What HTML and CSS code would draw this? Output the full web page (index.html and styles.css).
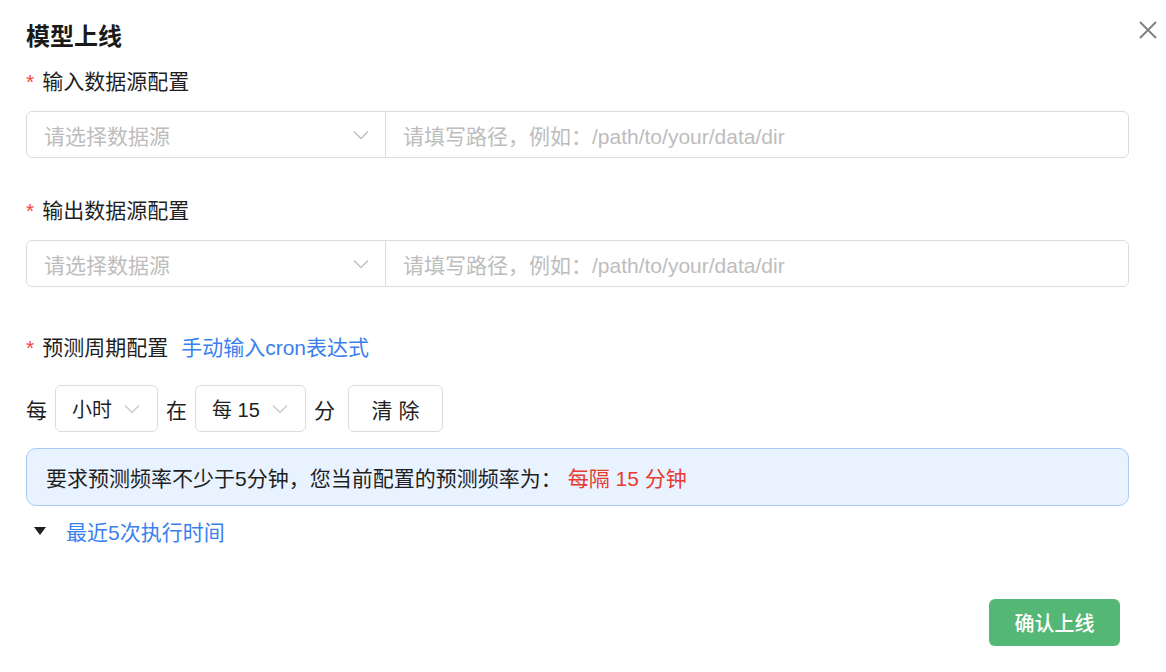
FILE: index.html
```html
<!DOCTYPE html>
<html>
  <head>
    <title>模型上线</title>
    <link rel="stylesheet" href="styles.css">
  </head>
  <body>
    <div class="dialog">
      <button class="close" aria-label="关闭">
        <svg width="20" height="20" viewBox="0 0 20 20">
          <path d="M2 2 L18 18 M18 2 L2 18" stroke="#7f7f7f" stroke-width="1.8" fill="none" />
        </svg>
      </button>
      <div class="title">模型上线</div>

      <div class="label"><span class="req">*</span>输入数据源配置</div>
      <div class="groep">
        <div class="kies">
          <span class="placeholder">请选择数据源</span>
          <svg class="pijl" width="16" height="10" viewBox="0 0 16 10">
            <path d="M1 1.5 L8 8.5 L15 1.5" stroke="#bfbfbf" stroke-width="1.4" fill="none" />
          </svg>
        </div>
        <div class="pad">请填写路径，例如：/path/to/your/data/dir</div>
      </div>

      <div class="label"><span class="req">*</span>输出数据源配置</div>
      <div class="groep">
        <div class="kies">
          <span class="placeholder">请选择数据源</span>
          <svg class="pijl" width="16" height="10" viewBox="0 0 16 10">
            <path d="M1 1.5 L8 8.5 L15 1.5" stroke="#bfbfbf" stroke-width="1.4" fill="none" />
          </svg>
        </div>
        <div class="pad">请填写路径，例如：/path/to/your/data/dir</div>
      </div>

      <div class="label label-cron"><span class="req">*</span>预测周期配置<a class="link">手动输入cron表达式</a></div>
      <div class="rij">
        <span class="woord">每</span>
        <div class="klein kies-uur">
          <span>小时</span>
          <svg width="16" height="10" viewBox="0 0 16 10">
            <path d="M1 1.5 L8 8.5 L15 1.5" stroke="#c8c8c8" stroke-width="1.3" fill="none" />
          </svg>
        </div>
        <span class="woord">在</span>
        <div class="klein kies-min">
          <span>每 15</span>
          <svg width="16" height="10" viewBox="0 0 16 10">
            <path d="M1 1.5 L8 8.5 L15 1.5" stroke="#c8c8c8" stroke-width="1.3" fill="none" />
          </svg>
        </div>
        <span class="woord">分</span>
        <button class="knop-wis">清 除</button>
      </div>

      <div class="melding">要求预测频率不少于5分钟，您当前配置的预测频率为：<span class="rood">每隔 15 分钟</span></div>

      <div class="inklap"><span class="driehoek"></span><a class="link">最近5次执行时间</a></div>

      <div class="voet">
        <button class="knop-ok">确认上线</button>
      </div>
    </div>
  </body>
</html>
```

FILE: styles.css
```css
body {
  margin: 0;
  background-color: white;
  font-family: "Liberation Sans", "Noto Sans CJK SC", sans-serif;
  color: #1f1f1f;
}
.dialog {
  position: relative;
  padding: 21px 37px 0 26px;
}
.close {
  position: absolute;
  top: 20px;
  right: 8px;
  padding: 0;
  border: none;
  background: none;
}
.title {
  height: 32px;
  line-height: 32px;
  font-size: 24px;
  font-weight: bold;
  color: #1a1a1a;
  margin-bottom: 14px;
}
.label {
  height: 30px;
  line-height: 30px;
  font-size: 21px;
  margin-bottom: 14px;
}
.req {
  color: #f04848;
  margin-right: 8px;
}
.groep {
  display: flex;
  height: 47px;
  box-sizing: border-box;
  border: 1px solid #dcdcdc;
  border-radius: 6px;
  margin-bottom: 38px;
  font-size: 21px;
}
.kies {
  width: 359px;
  display: flex;
  align-items: center;
  justify-content: space-between;
  padding: 0 16px 0 17px;
  box-sizing: border-box;
  border-right: 1px solid #dcdcdc;
}
.placeholder,
.pad {
  color: #bdbdbd;
}
.pad {
  display: flex;
  align-items: center;
  padding-left: 17px;
}
.label-cron {
  margin-top: 46px;
  margin-bottom: 22px;
}
.link {
  color: #3a7ff0;
  margin-left: 13px;
}
.rij {
  display: flex;
  align-items: center;
  height: 47px;
  margin-bottom: 16px;
  font-size: 21px;
}
.woord {
  margin-right: 8px;
}
.klein {
  display: flex;
  align-items: center;
  justify-content: space-between;
  height: 47px;
  box-sizing: border-box;
  border: 1px solid #dcdcdc;
  border-radius: 6px;
  padding: 0 17px 0 16px;
  margin-right: 8px;
  font-size: 20px;
}
.kies-uur {
  width: 103px;
}
.kies-min {
  width: 111px;
}
.knop-wis {
  height: 47px;
  width: 95px;
  margin-left: 5px;
  border: 1px solid #dcdcdc;
  border-radius: 6px;
  background-color: white;
  font-family: inherit;
  font-size: 21px;
  color: #1f1f1f;
}
.melding {
  height: 58px;
  box-sizing: border-box;
  display: flex;
  align-items: center;
  padding-left: 19px;
  background-color: #e8f3ff;
  border: 1px solid #a6cbf5;
  border-radius: 10px;
  font-size: 21px;
  margin-bottom: 10px;
}
.rood {
  color: #e93a30;
  margin-left: 6px;
}
.inklap {
  display: flex;
  align-items: center;
  height: 30px;
  font-size: 21px;
  padding-left: 8px;
}
.driehoek {
  width: 0;
  height: 0;
  border-left: 6px solid transparent;
  border-right: 6px solid transparent;
  border-top: 8px solid #1f1f1f;
  margin-right: 7px;
}
.voet {
  display: flex;
  justify-content: flex-end;
  padding-right: 9px;
  margin-top: 53px;
}
.knop-ok {
  height: 47px;
  width: 131px;
  border: none;
  border-radius: 6px;
  background-color: #55b776;
  box-shadow: 0 2px 0 #e3f6e8;
  color: white;
  font-family: inherit;
  font-size: 20px;
  font-weight: 500;
}
```
